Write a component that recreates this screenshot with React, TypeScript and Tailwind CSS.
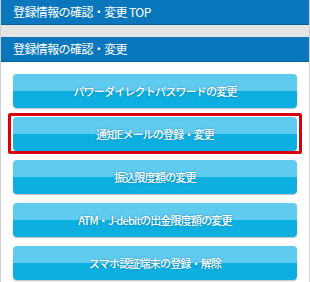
const items = [
  'パワーダイレクトパスワードの変更',
  '通知Eメールの登録・変更',
  '振込限度額の変更',
  'ATM・J-debitの出金限度額の変更',
  'スマホ認証端末の登録・解除',
];

export default function App() {
  return (
    <div
      className="w-[310px] h-[282px] overflow-hidden bg-white border-x border-[#cfcfcf] text-white"
      style={{ fontFamily: '"Noto Sans CJK JP", "Noto Sans", sans-serif' }}
    >
      {/* top heading */}
      <div className="h-[25px] bg-[#0a77bc] border-b border-[#07609a] flex items-center px-[12px] text-[12px] tracking-[-0.6px]">
        登録情報の確認・変更 TOP
      </div>
      <div className="h-[12px] bg-[#e4e4e4]" />
      <div className="h-[25px] bg-[#0a77bc] border-b border-[#07609a] flex items-center px-[12px] text-[12px] tracking-[-0.6px]">
        登録情報の確認・変更
      </div>

      {/* menu buttons */}
      <div className="flex flex-col gap-[9px] pt-[12px] px-[12px]">
        {items.map((label, i) => (
          <div key={label} className="relative">
            <button className="h-[34px] w-full rounded-[4px] flex items-center justify-center text-[11px] font-medium tracking-[-0.8px] text-white bg-gradient-to-b from-[#5fcbee] from-50% to-[#0cafe0] to-50% shadow-[0_1px_1px_rgba(0,0,0,0.25)] [text-shadow:0_0_2px_rgba(0,80,130,0.6)]">
              {label}
            </button>
            {i === 1 && (
              <span className="absolute -left-[5px] -right-[5px] -top-[4px] -bottom-[3px] border-[3px] border-[#d8000f] rounded-[2px] pointer-events-none" />
            )}
          </div>
        ))}
      </div>
    </div>
  );
}
